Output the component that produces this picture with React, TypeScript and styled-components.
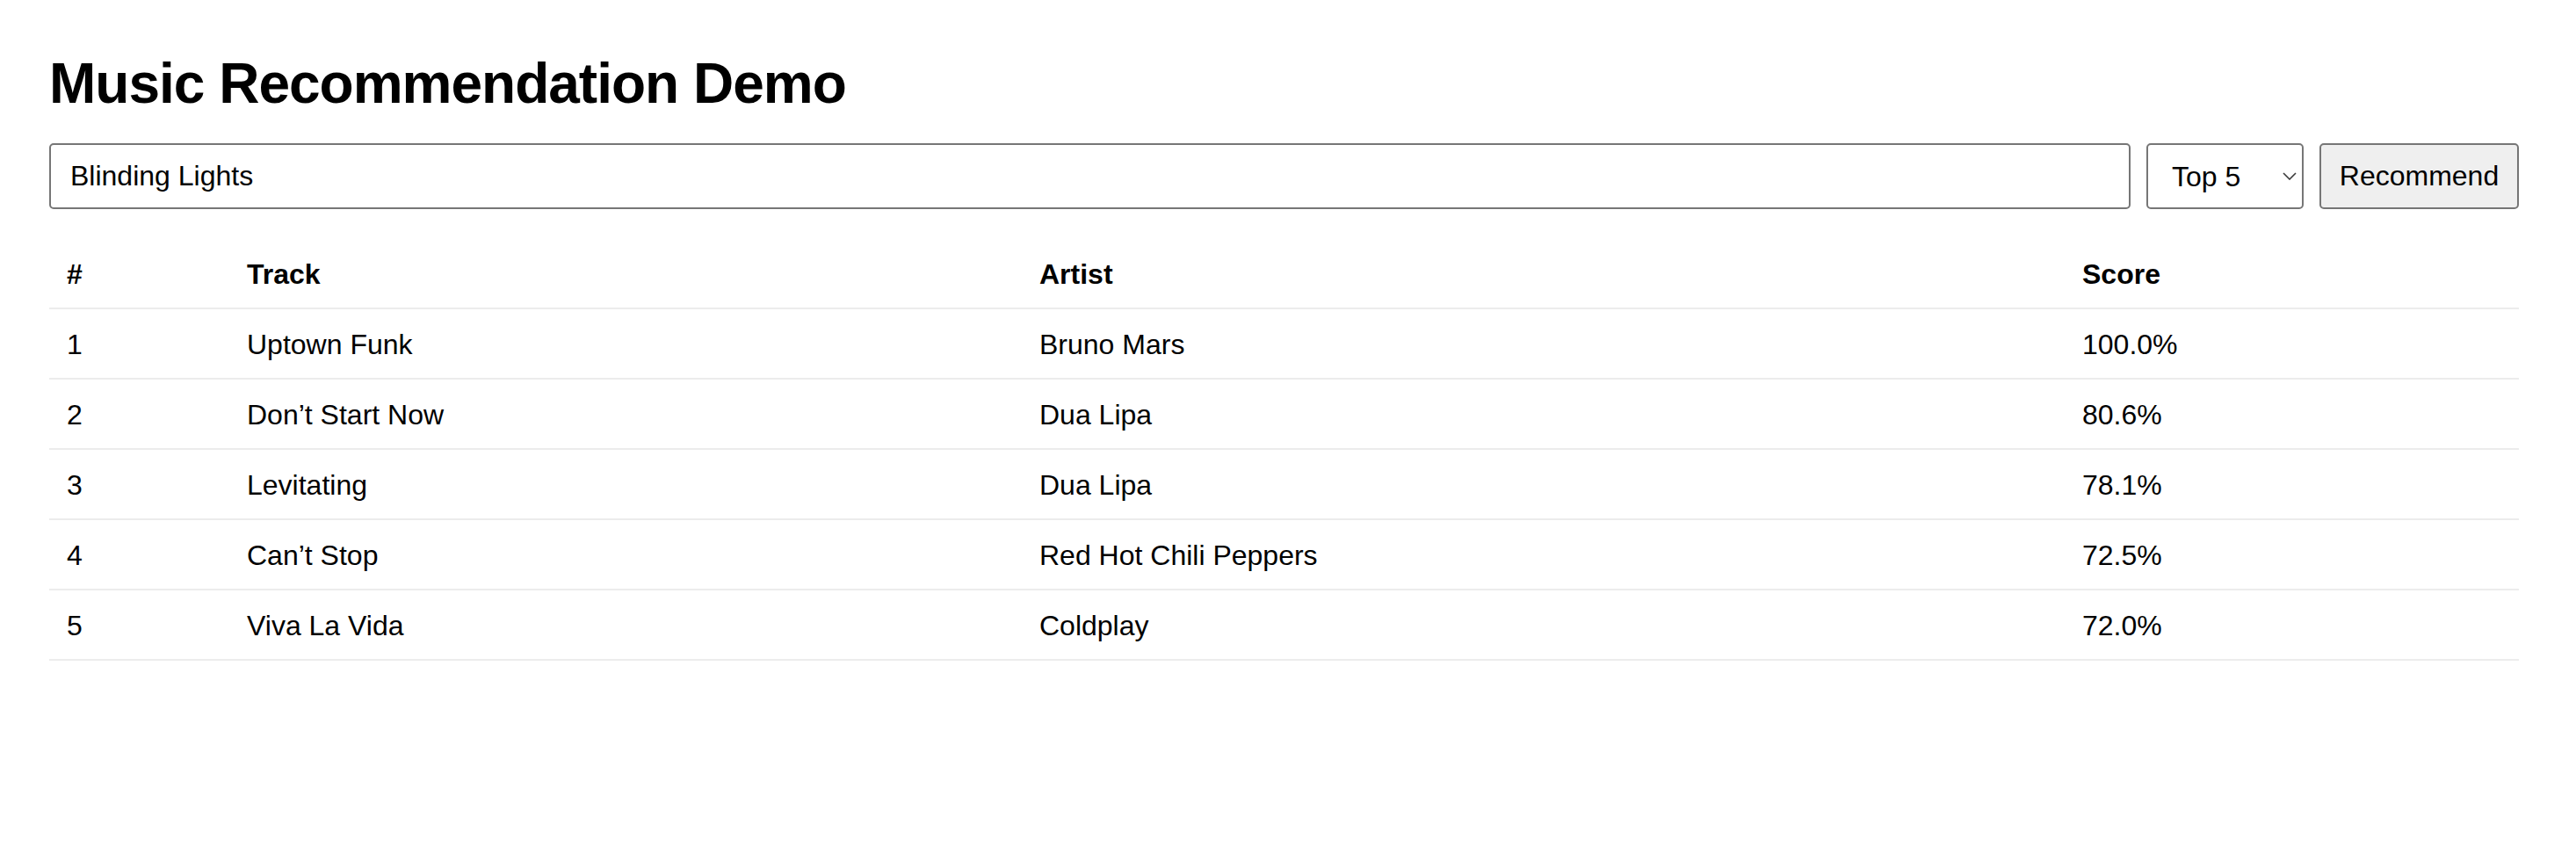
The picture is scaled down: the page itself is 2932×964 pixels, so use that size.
import React, { useState } from 'react'
import styled, { createGlobalStyle } from 'styled-components'

type Rec = {
  rank: number
  track: string
  artist: string
  score: number
}

const recs: Rec[] = [
  { rank: 1, track: 'Uptown Funk', artist: 'Bruno Mars', score: 100.0 },
  { rank: 2, track: 'Don’t Start Now', artist: 'Dua Lipa', score: 80.6 },
  { rank: 3, track: 'Levitating', artist: 'Dua Lipa', score: 78.1 },
  { rank: 4, track: 'Can’t Stop', artist: 'Red Hot Chili Peppers', score: 72.5 },
  { rank: 5, track: 'Viva La Vida', artist: 'Coldplay', score: 72.0 },
]

const GlobalStyle = createGlobalStyle`
  html, body {
    margin: 0;
    padding: 0;
    background: #fff;
    color: #000;
    font-family: "Liberation Sans", Arial, sans-serif;
  }
`

const App: React.FC = () => {
  const [query, setQuery] = useState('Blinding Lights')
  const [top, setTop] = useState('5')

  return (
    <SPage>
      <GlobalStyle />
      <STitle>Music Recommendation Demo</STitle>
      <SToolbar>
        <SInput value={query} onChange={e => setQuery(e.target.value)} />
        <SSelectWrap>
          <SSelect value={top} onChange={e => setTop(e.target.value)}>
            <option value="5">Top 5</option>
            <option value="10">Top 10</option>
            <option value="20">Top 20</option>
          </SSelect>
          <Chevron viewBox="0 0 16 9" aria-hidden>
            <path d="M1 1 L8 8 L15 1" />
          </Chevron>
        </SSelectWrap>
        <SButton type="button">Recommend</SButton>
      </SToolbar>
      <STable>
        <colgroup>
          <col style={{ width: 205 }} />
          <col style={{ width: 902 }} />
          <col style={{ width: 1187 }} />
          <col />
        </colgroup>
        <thead>
          <tr>
            <SHead>#</SHead>
            <SHead>Track</SHead>
            <SHead>Artist</SHead>
            <SHead>Score</SHead>
          </tr>
        </thead>
        <tbody>
          {recs.map(r => (
            <tr key={r.rank}>
              <SCell>{r.rank}</SCell>
              <SCell>{r.track}</SCell>
              <SCell>{r.artist}</SCell>
              <SCell>{r.score.toFixed(1)}%</SCell>
            </tr>
          ))}
        </tbody>
      </STable>
    </SPage>
  )
}

const SPage = styled.div`
  padding: 58px 65px 0 56px;
`

const STitle = styled.h1`
  margin: 0 0 31px;
  font-size: 64px;
  line-height: 74px;
  font-weight: 700;
  letter-spacing: -1px;
`

const SToolbar = styled.div`
  display: flex;
  align-items: stretch;
  gap: 18px;
  height: 75px;
`

const controlBase = `
  box-sizing: border-box;
  height: 75px;
  margin: 0;
  border: 2px solid #767676;
  border-radius: 5px;
  font-family: "Liberation Sans", Arial, sans-serif;
  font-size: 32px;
  color: #000;
  outline: none;
`

const SInput = styled.input`
  ${controlBase}
  flex: 1;
  min-width: 0;
  padding: 0 22px;
  background: #fff;
`

const SSelectWrap = styled.div`
  position: relative;
  width: 179px;
`

const SSelect = styled.select`
  ${controlBase}
  width: 100%;
  padding: 0 0 0 27px;
  background: #fff;
  appearance: none;
  -webkit-appearance: none;
`

const Chevron = styled.svg`
  position: absolute;
  top: 33px;
  right: 8px;
  width: 16px;
  height: 9px;
  fill: none;
  stroke: #3a3a3a;
  stroke-width: 1.6;
  pointer-events: none;
`

const SButton = styled.button`
  ${controlBase}
  width: 227px;
  padding: 0;
  background: #efefef;
`

const STable = styled.table`
  width: 100%;
  margin-top: 34px;
  border-collapse: collapse;
  table-layout: fixed;
  font-size: 32px;
`

const SHead = styled.th`
  padding: 21px 20px 19px;
  line-height: 38px;
  font-weight: 700;
  text-align: left;
  border-bottom: 2px solid #ececec;
`

const SCell = styled.td`
  padding: 21px 20px 19px;
  line-height: 38px;
  text-align: left;
  border-bottom: 2px solid #ececec;
`

export default App
